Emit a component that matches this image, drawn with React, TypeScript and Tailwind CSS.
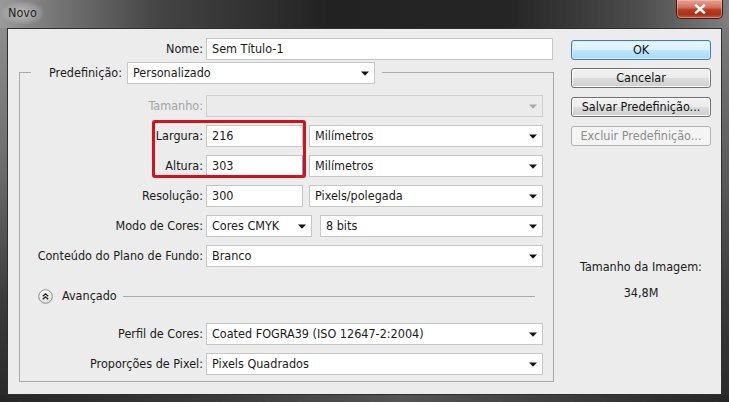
import React from "react";

const font = "font-['DejaVu_Sans_Condensed','DejaVu_Sans',sans-serif]";

function Arrow({ disabled }: { disabled?: boolean }) {
  return (
    <svg width="8" height="5" viewBox="0 0 8 5" className="shrink-0">
      <path d="M0 0.5 H8 L4 4.8 Z" fill={disabled ? "#a8a8a8" : "#141414"} />
    </svg>
  );
}

function Select({
  className,
  value,
  disabled,
}: {
  className: string;
  value: string;
  disabled?: boolean;
}) {
  return (
    <div
      className={
        "flex h-[22px] shrink-0 items-center justify-between border pl-[5px] pr-[5px] " +
        (disabled ? "border-[#cfcfcf] bg-[#ebebeb] " : "border-[#c6c6c6] bg-white ") +
        className
      }
    >
      <span className="whitespace-nowrap leading-[16px]">{value}</span>
      <Arrow disabled={disabled} />
    </div>
  );
}

function Input({ className, value }: { className: string; value: string }) {
  return (
    <div
      className={
        "flex h-[22px] shrink-0 items-center border bg-white pl-[5px] " + className
      }
    >
      <span className="whitespace-nowrap leading-[16px]">{value}</span>
    </div>
  );
}

function Label({ children, gray }: { children: React.ReactNode; gray?: boolean }) {
  return (
    <div
      className={
        "w-[183px] shrink-0 whitespace-nowrap text-right leading-[16px] " +
        (gray ? "text-[#a3a3a3]" : "text-[#1a1a1a]")
      }
    >
      {children}
    </div>
  );
}

function Button({
  children,
  kind,
  className,
}: {
  children: React.ReactNode;
  kind: "default" | "normal" | "disabled";
  className: string;
}) {
  const styles =
    kind === "default"
      ? "border-[#3c7fb1] bg-[linear-gradient(to_bottom,#eaf6fd_0%,#d9f0fc_50%,#bee6fd_51%,#a7d9f5_100%)] text-[#111] shadow-[inset_0_0_0_1px_#d4ecfa]"
      : kind === "normal"
      ? "border-[#707070] bg-[linear-gradient(to_bottom,#f2f2f2_0%,#ebebeb_50%,#dddddd_51%,#cfcfcf_100%)] text-[#111] shadow-[inset_0_0_0_1px_#fbfbfb]"
      : "border-[#adb2b5] bg-[#f4f4f4] text-[#8c8c8c]";
  return (
    <div
      className={
        "flex h-[20px] w-[140px] items-center justify-center rounded-[3px] border whitespace-nowrap leading-[16px] " +
        styles +
        " " +
        className
      }
    >
      {children}
    </div>
  );
}

function Row({ children, className }: { children: React.ReactNode; className: string }) {
  return <div className={"flex h-[22px] items-center " + className}>{children}</div>;
}

export default function App() {
  return (
    <div
      className={
        "relative h-[402px] w-[729px] overflow-hidden text-[12.5px] leading-[16px] text-[#1a1a1a] " +
        font
      }
    >
      {/* Title bar */}
      <div className="flex h-[28px] items-start bg-[linear-gradient(to_right,#9a9a9a_0%,#747474_8%,#444444_22%,#222222_45%,#252525_70%,#4e4e4e_88%,#7e7e7e_100%)]">
        <div className="ml-[2px] mt-[2px] rounded-[10px] bg-[radial-gradient(ellipse_at_center,rgba(205,205,205,0.75)_0%,rgba(190,190,190,0.35)_55%,rgba(160,160,160,0)_80%)] px-[6px] py-[3px] text-[12.5px] leading-[16px] text-[#1e1e1e]">
          Novo
        </div>
        <div className="flex-1" />
        <div className="mr-[6px] flex h-[19px] w-[47px] items-center justify-center rounded-b-[5px] border border-t-0 border-[#3d1c16] bg-[linear-gradient(to_bottom,#e2a393_0%,#d27262_40%,#b83a22_55%,#a8321a_80%,#c45a40_100%)] shadow-[inset_0_0_0_1px_rgba(255,200,190,0.45)]">
          <svg width="12" height="10" viewBox="0 0 12 10">
            <path
              d="M2 1.5 L10 8.5 M10 1.5 L2 8.5"
              stroke="#ffffff"
              strokeWidth="2.4"
              strokeLinecap="square"
            />
          </svg>
        </div>
      </div>

      {/* Middle row */}
      <div className="flex h-[367px]">
        <div className="w-[7px] bg-[linear-gradient(to_bottom,#8d8d8d_0%,#6a6a6a_40%,#3a3a3a_75%,#2a2a2a_100%)]" />
        <div className="flex w-[715px] border border-[#2e2e2e] bg-[#ececec]">
          {/* Left column */}
          <div className="flex w-[546px] flex-col pt-[9px]">
            <Row className="">
              <div className="w-[195px] shrink-0 text-right">Nome:</div>
              <Input className="ml-[3px] w-[347px] border-[#c6c6c6]" value="Sem Título-1" />
            </Row>

            {/* Group box */}
            <div className="ml-[11px] mt-[2px] flex w-[535px] flex-col">
              <div className="flex h-[22px]">
                <div className="h-[12px] w-[12px] self-end border-l border-t border-[#a9a9a9]" />
                <div className="flex w-[91px] items-center justify-end whitespace-nowrap">
                  Predefinição:
                </div>
                <Select className="ml-[5px] w-[248px]" value="Personalizado" />
                <div className="ml-[7px] h-[12px] flex-1 self-end border-r border-t border-[#a9a9a9]" />
              </div>
              <div className="flex flex-col border-b border-l border-r border-[#a9a9a9] pb-[6px] pt-[11px]">
                <Row className="">
                  <Label gray>Tamanho:</Label>
                  <Select className="ml-[3px] w-[337px]" value="" disabled />
                </Row>
                <div className="relative">
                  <Row className="mt-[8px]">
                    <Label>Largura:</Label>
                    <Input className="ml-[3px] w-[97px] border-[#c6c6c6]" value="216" />
                    <Select className="ml-[6px] w-[234px]" value="Milímetros" />
                  </Row>
                  <Row className="mt-[8px]">
                    <Label>Altura:</Label>
                    <Input className="ml-[3px] w-[97px] border-[#c6c6c6] border-r-[#7a9cc0] border-b-[#7a9cc0]" value="303" />
                    <Select className="ml-[6px] w-[234px]" value="Milímetros" />
                  </Row>
                  <div className="pointer-events-none absolute left-[132px] top-[3px] h-[58px] w-[154px] rounded-[3px] border-[3px] border-[#d3131b]" />
                </div>
                <Row className="mt-[8px]">
                  <Label>Resolução:</Label>
                  <Input className="ml-[3px] w-[97px] border-[#c6c6c6]" value="300" />
                  <Select className="ml-[6px] w-[234px]" value="Pixels/polegada" />
                </Row>
                <Row className="mt-[8px]">
                  <Label>Modo de Cores:</Label>
                  <Select className="ml-[3px] w-[106px]" value="Cores CMYK" />
                  <Select className="ml-[8px] w-[223px]" value="8 bits" />
                </Row>
                <Row className="mt-[8px]">
                  <Label>Conteúdo do Plano de Fundo:</Label>
                  <Select className="ml-[3px] w-[337px]" value="Branco" />
                </Row>
                <Row className="mt-[18px]">
                  <svg width="15" height="15" viewBox="0 0 15 15" className="ml-[18px] shrink-0">
                    <defs>
                      <linearGradient id="cg" x1="0" y1="0" x2="0" y2="1">
                        <stop offset="0" stopColor="#ffffff" />
                        <stop offset="1" stopColor="#dcdcdc" />
                      </linearGradient>
                    </defs>
                    <circle cx="7.5" cy="7.5" r="6.8" fill="url(#cg)" stroke="#8c8c8c" strokeWidth="1" />
                    <path d="M4.8 7.3 L7.5 4.8 L10.2 7.3 M4.8 10.3 L7.5 7.8 L10.2 10.3" fill="none" stroke="#222" strokeWidth="1.3" />
                  </svg>
                  <span className="ml-[9px] whitespace-nowrap">Avançado</span>
                  <div className="ml-[6px] mr-[18px] h-px flex-1 bg-[#a9a9a9]" />
                </Row>
                <Row className="mt-[16px]">
                  <Label>Perfil de Cores:</Label>
                  <Select className="ml-[3px] w-[337px]" value="Coated FOGRA39 (ISO 12647-2:2004)" />
                </Row>
                <Row className="mt-[8px]">
                  <Label>Proporções de Pixel:</Label>
                  <Select className="ml-[3px] w-[337px]" value="Pixels Quadrados" />
                </Row>
              </div>
            </div>
          </div>

          {/* Right column */}
          <div className="ml-[17px] flex w-[140px] flex-col items-center pt-[11px]">
            <Button kind="default" className="">OK</Button>
            <Button kind="normal" className="mt-[8px]">Cancelar</Button>
            <Button kind="normal" className="mt-[9px]">Salvar Predefinição...</Button>
            <Button kind="disabled" className="mt-[9px]">Excluir Predefinição...</Button>
            <div className="mt-[113px] whitespace-nowrap">Tamanho da Imagem:</div>
            <div className="mt-[10px] whitespace-nowrap">34,8M</div>
          </div>
        </div>
        <div className="w-[7px] bg-[linear-gradient(to_bottom,#7a7a7a_0%,#5a5a5a_40%,#3a3a3a_75%,#2c2c2c_100%)]" />
      </div>

      {/* Bottom frame */}
      <div className="h-[7px] bg-[linear-gradient(to_right,#262626_0%,#3a3a3a_30%,#545454_55%,#3a3a3a_80%,#262626_100%)]" />
    </div>
  );
}
